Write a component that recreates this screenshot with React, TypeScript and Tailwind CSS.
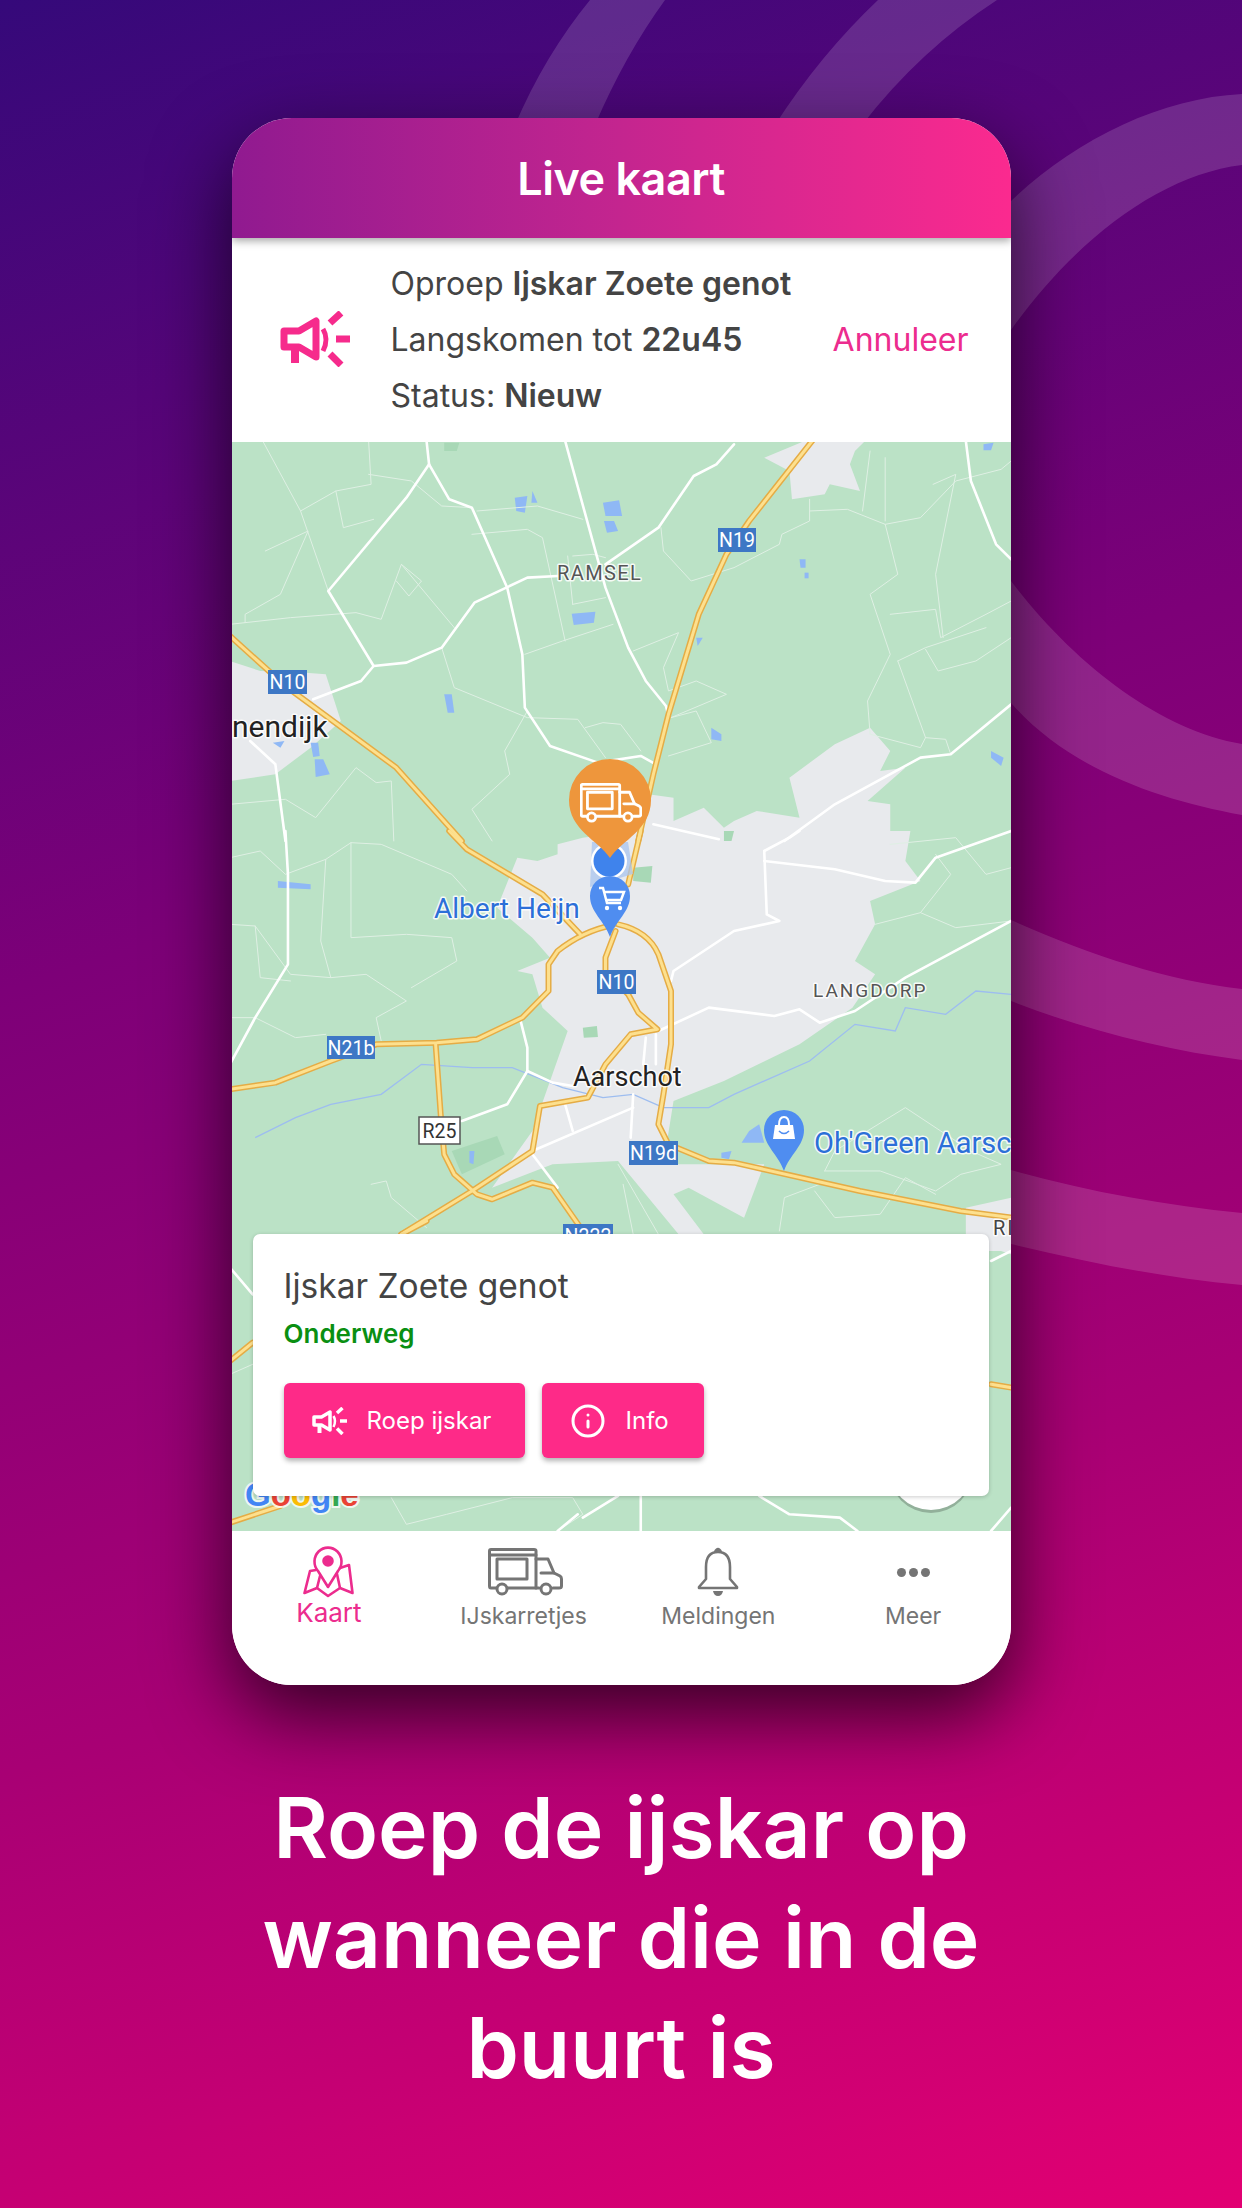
import { Info } from 'lucide-react';

const FONT = "font-['Inter','Noto_Sans',sans-serif]";

// map traced in three strips, each with its own scale
const Z2 = 'translate(-2 -1) scale(0.504 0.3333)';
const Z3 = 'translate(-2 389) scale(0.504 0.3333)';
const Z4 = 'translate(-2 779) scale(0.504 0.3333)';

const urban = [
    [Z2, 'M1060 50 L1140 0 L1260 0 L1240 30 L1230 70 L1250 150 L1190 130 L1180 160 L1115 175 L1110 90 Z'],
    [Z2, 'M0 660 L60 690 L150 695 L190 700 L220 840 L160 920 L90 1000 L0 1020 Z'],
    [Z2, 'M830 1060 L880 1070 L880 1140 L940 1100 L980 1160 L1000 1140 L1045 1110 L1130 1130 L1110 1010 L1200 910 L1270 860 L1310 930 L1290 990 L1340 980 L1265 1080 L1310 1090 L1310 1200 L800 1200 Z'],
    [Z3, 'M650 40 L700 20 L800 0 L1350 0 L1340 90 L1370 150 L1270 210 L1280 280 L1240 390 L1280 430 L1235 530 L1130 640 L980 750 L880 810 L860 1000 L1060 1000 L1020 1160 L910 1070 L880 1090 L940 1210 L890 1210 L770 990 L640 1000 L520 1070 L600 900 L670 600 L620 530 L600 430 L570 420 L635 380 L600 320 L530 230 L570 80 L610 90 L650 70 Z'],
    [Z3, 'M1460 1130 L1550 1100 L1550 1260 L1460 1260 Z'],
    [Z4, 'M1460 0 L1550 0 L1550 100 L1510 80 Z'],
];

const parks = [
    [Z3, 'M700 590 L728 585 L730 618 L702 620 Z'],
    [Z3, 'M440 960 L530 915 L545 970 L460 1030 Z'],
    [Z3, 'M800 110 L838 105 L835 155 L800 150 Z'],
    [Z3, 'M980 0 L1000 0 L995 30 L980 30 Z'],
    [Z2, 'M425 5 L455 5 L450 30 L425 30 Z'],
];

const water = [
    [Z2, 'M565 170 L590 165 L585 215 L568 210 Z'],
    [Z2, 'M600 150 L610 185 L598 185 Z'],
    [Z2, 'M740 185 L772 178 L778 225 L745 225 Z'],
    [Z2, 'M742 240 L762 240 L770 270 L748 275 Z'],
    [Z2, 'M678 518 L725 512 L722 545 L682 552 Z'],
    [Z2, 'M160 905 L175 905 L178 945 L165 948 Z'],
    [Z2, 'M168 955 L185 955 L198 1000 L170 1008 Z'],
    [Z2, 'M85 905 L108 900 L100 920 Z'],
    [Z2, 'M1130 355 L1142 355 L1142 380 L1132 380 Z'],
    [Z2, 'M1140 395 L1148 395 L1148 412 L1140 412 Z'],
    [Z2, 'M425 760 L440 760 L445 815 L432 815 Z'],
    [Z2, 'M955 860 L975 880 L975 900 L955 895 Z'],
    [Z2, 'M1495 10 L1515 5 L1510 28 L1495 28 Z'],
    [Z2, 'M1510 930 L1535 950 L1530 975 L1510 950 Z'],
    [Z2, 'M925 590 L938 590 L928 615 Z'],
    [Z3, 'M1030 900 L1050 880 L1060 935 L1015 935 Z'],
    [Z3, 'M975 965 L995 960 L990 985 L975 980 Z'],
    [Z3, 'M95 150 L160 160 L160 175 L95 170 Z'],
    [Z3, 'M475 960 L485 960 L483 1000 L475 995 Z'],
];

const thinRoads = [
    [Z2, 'M65 0 L140 210 L195 450'],
    [Z2, 'M140 210 L210 150 L225 260 L285 235'],
    [Z2, 'M210 150 L280 130 L275 0'],
    [Z2, 'M275 100 L360 120 L420 195 L480 200'],
    [Z2, 'M70 330 L155 270 L100 460 L30 520 L30 545'],
    [Z2, 'M0 550 L120 530 L250 515 L300 535 L340 370 L445 560'],
    [Z2, 'M340 370 L380 420 L355 465 L330 420'],
    [Z2, 'M490 210 L610 195 L700 235'],
    [Z2, 'M480 280 L590 265 L620 290 L665 600'],
    [Z2, 'M585 640 L660 600 L760 550'],
    [Z2, 'M420 620 L445 740 L590 830 L690 835 L745 950'],
    [Z2, 'M590 810 L545 930 L555 1000 L480 1105 L520 1200'],
    [Z2, 'M705 860 L740 845 L775 850 L815 930'],
    [Z2, 'M800 630 L890 575 L860 680 L870 750 L925 720 L985 760 L875 830 L925 810 L955 905 L870 945'],
    [Z2, 'M680 345 L720 340 L745 350 M680 490 L745 470 M670 345 L680 490'],
    [Z2, 'M855 260 L860 330 L915 420 L1000 380 L1090 310 L1095 280 L1150 240 L1150 210 L1225 205 L1300 250 L1325 400 L1270 460 L1310 640 L1265 780 L1270 880 L1370 920 L1380 890 L1420 895 L1430 940'],
    [Z2, 'M1150 210 L1150 175 M1300 50 L1300 240 M1270 30 L1255 210'],
    [Z2, 'M1300 250 L1370 230 L1440 120 L1530 85 L1550 60'],
    [Z2, 'M1310 520 L1400 505 L1410 590 L1500 520 L1550 480'],
    [Z2, 'M1325 660 L1380 620 L1500 560 M1380 625 L1405 690 L1480 660 L1550 590'],
    [Z2, 'M1325 660 L1380 890'],
    [Z2, 'M1395 130 L1440 100 L1400 400 L1415 590'],
    [Z2, 'M0 1090 L110 1075 L170 1130 L250 980 L290 1025 L320 1020 L325 1200'],
    [Z3, 'M0 80 L60 60 L110 130 L190 85 L240 35 L300 40 L440 130 L470 180'],
    [Z3, 'M190 85 L180 330 L200 440 L270 430 L350 510 L290 560 L300 630'],
    [Z3, 'M240 35 L240 320 L350 310 L440 320 L450 390 L360 470'],
    [Z3, 'M0 280 L50 285 L120 430 L200 440'],
    [Z3, 'M50 285 L60 440 L120 450'],
    [Z3, 'M0 560 L50 560 L130 620 L190 610'],
    [Z3, 'M1310 40 L1440 20 L1500 130 L1550 110'],
    [Z3, 'M1280 280 L1370 245 L1440 290 L1550 270'],
    [Z3, 'M1370 245 L1430 130 L1400 70'],
    [Z3, 'M1180 1020 L1290 1020 L1400 1080 L1450 1030 L1530 1000 L1470 960 L1340 830 L1200 960 L1180 1020'],
    [Z3, 'M1160 1080 L1200 1160 L1290 1150 L1340 1040 L1400 1090'],
    [Z3, 'M280 1060 L310 1050 L320 1100 L390 1190'],
    [Z3, 'M770 1000 L850 1210 M780 1060 L800 1210'],
    [Z3, 'M1090 1200 L1100 1100 L1170 1060'],
    [Z4, 'M320 830 L350 910 L430 880 L560 830 L680 830 L700 880 L650 930'],
    [Z4, 'M0 460 L45 430 M0 460 L0 400'],
];

const mainRoads = [
    [Z2, 'M390 0 L395 70 L435 175 L480 200 L550 440 L580 640 L585 800 L635 915 L730 965 L815 945 L845 970'],
    [Z2, 'M395 70 L350 170 L195 450 L285 675 L260 720 L165 775'],
    [Z2, 'M285 675 L350 665 L420 620 L485 485 L590 410 L650 405'],
    [Z2, 'M665 0 L745 440 L790 620 L825 720 L865 795 L870 825'],
    [Z2, 'M745 370 L850 260 L920 105 L965 70 L1000 10'],
    [Z2, 'M1460 0 L1470 120 L1520 310 L1550 355'],
    [Z2, 'M1550 790 L1430 940 L1370 950 L1200 1090 L1100 1200'],
    [Z2, 'M840 1150 L970 1195'],
    [Z2, 'M40 900 L90 970 L110 1200'],
    [Z3, 'M110 0 L115 130 L115 400 L50 560 L0 700'],
    [Z3, 'M1060 60 L1065 250 L1090 270 L1000 300 L880 420 L875 450'],
    [Z3, 'M1060 60 L1110 20 L1130 0'],
    [Z3, 'M1060 90 L1200 115 L1300 150 L1360 155 L1400 80 L1550 0'],
    [Z3, 'M850 600 L950 530 L1080 555 L1130 535 L1170 575 L1240 540 L1340 440 L1550 270'],
    [Z3, 'M575 560 L590 650 L590 720 L550 820 L460 870'],
    [Z3, 'M590 720 L640 755 L680 765'],
    [Z3, 'M600 960 L800 830'],
    [Z3, 'M665 820 L680 900'],
    [Z3, 'M825 620 L820 700 M845 610 L845 700 M800 790 L795 920'],
    [Z3, 'M600 970 L650 1070'],
    [Z4, 'M0 140 L45 220'],
    [Z4, 'M815 825 L815 930 M690 880 L650 930 M770 825 L700 890'],
    [Z4, 'M1050 825 L1110 880 L1210 890 L1245 930 M1510 930 L1550 860 M1510 120 L1550 90'],
];

const highways = [
    [Z2, 'M1155 0 L1030 240 L985 340 L930 520 L870 820 L840 1000 L810 1200'],
    [Z3, 'M815 0 L790 160'],
    [Z2, 'M0 585 L110 735 L330 980 L460 1200'],
    [Z3, 'M435 0 L470 55 L620 190 L695 310'],
    [Z3, 'M760 282 Q700 300 650 360 L632 400 L632 480 L580 560 L490 625 L410 635 L290 640 L200 690 L90 755 L0 775'],
    [Z3, 'M765 300 L745 380 L745 420 L790 490 L810 545 L848 595 L795 610 L745 700 L710 800 L615 825 L600 960 L480 1080 L340 1210'],
    [Z3, 'M770 280 Q830 300 850 370 L875 480 L875 640 L860 790 L850 880 L870 940 L950 990 L1000 995 L1250 1080 L1450 1140 L1550 1160'],
    [Z3, 'M408 640 L418 850 L425 970 L445 1030 L490 1090 L520 1105 L600 1055 L640 1070 L700 1200'],
    [Z4, 'M0 420 L45 365 M1510 490 L1550 500 M0 905 L100 855 M340 40 L390 0'],
];

function Lines({ items, color, width }: { items: string[][]; color: string; width: number }) {
    return (
        <>
            {items.map(([t, d], i) => (
                <path key={i} transform={t} d={d} fill="none" stroke={color} strokeWidth={width} strokeLinejoin="round" strokeLinecap="round" vectorEffect="non-scaling-stroke" />
            ))}
        </>
    );
}

function Areas({ items, color }: { items: string[][]; color: string }) {
    return (
        <>
            {items.map(([t, d], i) => (
                <path key={i} transform={t} d={d} fill={color} />
            ))}
        </>
    );
}

function Shield({ x, y, w, h, label, plain }: { x: number; y: number; w: number; h: number; label: string; plain?: boolean }) {
    return (
        <g>
            <rect x={x} y={y} width={w} height={h} fill={plain ? '#ffffff' : '#3d77c5'} stroke={plain ? '#555555' : 'none'} strokeWidth={plain ? 1.5 : 0} />
            <text x={x + w / 2} y={y + h / 2 + 7} textAnchor="middle" fontSize={19.5} fontFamily="Roboto, sans-serif" fill={plain ? '#333333' : '#ffffff'}>{label}</text>
        </g>
    );
}

function Label({ x, y, size, color, children, spacing }: { x: number; y: number; size: number; color: string; children: string; spacing?: number }) {
    return (
        <text x={x} y={y} fontSize={size} fontFamily="Roboto, sans-serif" fill={color} letterSpacing={spacing} stroke="#ffffff" strokeWidth={3} strokeOpacity={0.85} paintOrder="stroke" strokeLinejoin="round">
            {children}
        </text>
    );
}

function TruckIcon({ color, x, y, width, height, sw = 3 }: { color: string; x?: number; y?: number; width: number; height: number; sw?: number }) {
    return (
        <svg x={x} y={y} width={width} height={height} viewBox="0 0 75 48" fill="none" stroke={color} strokeWidth={sw} strokeLinejoin="round" strokeLinecap="round">
            <path d="M8 40 H3 Q1.5 40 1.5 38 V3 Q1.5 1.5 3 1.5 H46 Q48 1.5 48 3 V40 H20" />
            <path d="M1.5 7 H48" />
            <rect x="9" y="11" width="30" height="20" />
            <path d="M48 11 H60 L66 25 L72 28 Q73.5 29 73.5 31 V38 Q73.5 40 71 40 H65 M51 40 H48" />
            <path d="M53 25 H66" />
            <circle cx="14" cy="41" r="5" />
            <circle cx="58" cy="41" r="5" />
        </svg>
    );
}

function MegaphoneIcon({ className, color }: { className: string; color: string }) {
    return (
        <svg className={className} viewBox="0 0 70 56" fill="none" stroke={color} strokeWidth={7}>
            <path d="M4 20 H19 L36 10 V46 L19 36 H4 Z" strokeLinejoin="round" />
            <path d="M15 37 V52" strokeWidth={8} />
            <path d="M43 18 Q49 28 43 40" strokeWidth={5} />
            <path d="M50 12 L61 2 M56 28 H70 M50 43 L61 54" />
        </svg>
    );
}

function MapPinIcon() {
    return (
        <svg className="w-[51px] h-[52px]" viewBox="0 0 51 52" fill="none" stroke="#ec2c8e" strokeWidth={2.6} strokeLinejoin="round" strokeLinecap="round">
            <path d="M25 41 L15 25 A13.5 14 0 1 1 35 25 Z" />
            <circle cx="25" cy="15" r="4.5" fill="#ec2c8e" />
            <path d="M13 24 L7 25 L1.5 47 L14 42 L25 50 L37 42 L49.5 47 L46 19 L37 22" />
            <path d="M14 42 L17 30 M37 42 L34 28" />
        </svg>
    );
}

function BellIcon() {
    return (
        <svg className="w-[42px] h-[50px]" viewBox="0 0 42 50" fill="none" stroke="#757575" strokeWidth={2.6} strokeLinejoin="round">
            <path d="M21 5 C12 5 9 12 9 20 V32 L2 40 V41 H40 V40 L33 32 V20 C33 12 30 5 21 5 Z" />
            <path d="M18 5 Q21 -1 24 5" fill="#757575" />
            <path d="M16 44 H26 Q25 49 21 49 Q17 49 16 44 Z" fill="#757575" stroke="none" />
        </svg>
    );
}

function MapCanvas() {
    return (
        <svg className="absolute inset-0 w-[779px] h-[1089px]" viewBox="0 0 779 1089">
            <rect width="779" height="1089" fill="#bbe2c6" />
            <Areas items={urban} color="#e8eaed" />
            <Areas items={parks} color="#a8d8b6" />
            <Areas items={water} color="#8fb8f5" />
            <path transform={Z3} d="M1550 490 L1480 480 L1420 550 L1340 530 L1320 600 L1240 580 L1150 690 L1000 790 L950 830 L860 830 L800 790 L740 800 L660 770 L560 710 L480 710 L380 700 L300 790 L200 820 L130 860 L50 920" fill="none" stroke="#9dbdf0" strokeWidth={1.3} vectorEffect="non-scaling-stroke" />
            <Lines items={thinRoads} color="#dff0e4" width={1} />
            <Lines items={mainRoads} color="#ffffff" width={2.6} />
            <Lines items={highways} color="#e5ac45" width={6} />
            <Lines items={highways} color="#fde08e" width={3} />

            <Shield x={486} y={86} w={38} h={24} label="N19" />
            <Shield x={36} y={228} w={39} h={24} label="N10" />
            <Shield x={365} y={528} w={39} h={24} label="N10" />
            <Shield x={95} y={594} w={48} h={23} label="N21b" />
            <Shield x={187} y={675} w={41} h={27} label="R25" plain />
            <Shield x={397} y={699} w={49} h={24} label="N19d" />
            <Shield x={331} y={782} w={50} h={24} label="N222" />

            <Label x={325} y={138} size={20} color="#555555" spacing={1.4}>RAMSEL</Label>
            <Label x={581} y={555} size={19} color="#555555" spacing={2}>LANGDORP</Label>
            <Label x={0} y={295} size={30} color="#222222">nendijk</Label>
            <Label x={341} y={644} size={27} color="#222222">Aarschot</Label>
            <Label x={202} y={476} size={28} color="#2c6fd8">Albert Heijn</Label>
            <Label x={582} y={711} size={29} color="#2c6fd8">Oh'Green Aarsc</Label>
            <Label x={761} y={793} size={20} color="#444444" spacing={2}>RI</Label>

            <g>
                <path d="M360 400 L396 400 L401 432 L358 445 Z" fill="#a9c4ee" opacity={0.75} />
                <circle cx="377" cy="419" r="18" fill="#ffffff" />
                <circle cx="377" cy="419" r="15.5" fill="#3f83ec" />
            </g>
            <path d="M378 416 C366 398 337 388 337 358 A41 41 0 1 1 419 358 C419 388 390 398 378 416 Z" fill="#ee963c" />
            <TruckIcon color="#ffffff" x={348} y={341} width={62} height={40} sw={3.4} />

            <path d="M378 495 C372 478 358 470 358 454 A20 20 0 1 1 398 454 C398 470 384 478 378 495 Z" fill="#4f8df0" />
            <path d="M367 446 H371 L375 461 H389 M373 450 H392 L389 458 H375" fill="none" stroke="#ffffff" strokeWidth={2.5} />
            <circle cx="375" cy="466" r="2.2" fill="#ffffff" />
            <circle cx="388" cy="466" r="2.2" fill="#ffffff" />

            <path d="M552 729 C546 712 532 704 532 688 A20 20 0 1 1 572 688 C572 704 558 712 552 729 Z" fill="#4f8df0" />
            <path d="M543 683 H561 L563 697 H541 Z" fill="#ffffff" />
            <path d="M547 683 Q547 675 552 675 Q557 675 557 683" fill="none" stroke="#ffffff" strokeWidth={2} />
            <path d="M547 689 Q552 694 557 689" fill="none" stroke="#4f8df0" strokeWidth={1.6} />

            <text x={13} y={1064} fontSize={33} fontWeight={700} fontFamily="Liberation Sans, sans-serif" stroke="#ffffff" strokeWidth={4} paintOrder="stroke" strokeOpacity={0.75}>
                <tspan fill="#4285f4">G</tspan>
                <tspan fill="#ea4335">o</tspan>
                <tspan fill="#fbbc05">o</tspan>
                <tspan fill="#4285f4">g</tspan>
                <tspan fill="#34a853">l</tspan>
                <tspan fill="#ea4335">e</tspan>
            </text>

            <circle cx="699" cy="1029" r="42" fill="#000000" opacity={0.22} />
            <circle cx="699" cy="1026" r="42" fill="#ffffff" />
        </svg>
    );
}

function NavItem({ label, active, children }: { label: string; active?: boolean; children: React.ReactNode }) {
    return (
        <div className="flex-1 flex flex-col items-center">
            <div className="h-[52px] flex items-center justify-center">{children}</div>
            <span className={active ? 'text-[26px] leading-[32px] mt-[-1px] text-[#ec2c8e]' : 'text-[23px] leading-[32px] mt-[2px] text-[#757575]'}>{label}</span>
        </div>
    );
}

export default function App() {
    return (
        <div className={`relative w-[1242px] h-[2208px] overflow-hidden flex flex-col items-center pt-[118px] bg-[linear-gradient(162deg,#35097a_0%,#7d0078_38%,#a80074_68%,#e20072_100%)] ${FONT}`}>
            <svg className="absolute inset-0 w-[1242px] h-[2208px]" viewBox="0 0 1242 2208" fill="#ffffff" opacity={0.14}>
                <path d="M590 0 H665 Q625 55 595 125 L515 125 Q545 55 590 0 Z" />
                <path d="M878 0 H997 Q920 50 862 125 L775 125 Q820 55 878 0 Z" />
                <path d="M1242 94 C1160 98 1075 140 1011 201 L950 450 L1011 581 C1075 665 1160 730 1242 744 V815 C1160 800 1070 770 1011 703 L900 450 L1011 330 C1075 240 1160 175 1242 165 Z" />
                <path d="M1011 920 C1090 955 1165 980 1242 989 V1060 C1165 1050 1085 1030 1011 1001 Z" />
                <path d="M1011 1170 C1090 1192 1165 1205 1242 1213 V1285 C1165 1278 1085 1262 1011 1244 Z" />
            </svg>

            <div className="relative w-[779px] h-[1567px] rounded-[60px] overflow-hidden bg-white flex flex-col shrink-0 shadow-[0_30px_80px_rgba(0,0,0,0.7)]">
                <div className="relative z-10 h-[120px] shrink-0 flex items-center justify-center bg-[linear-gradient(90deg,#901a90_0%,#c4258f_50%,#fb2a8f_100%)] shadow-[0_3px_8px_rgba(0,0,0,0.35)]">
                    <span className="text-[45px] mt-[2px] font-semibold text-white tracking-[-0.5px]">Live kaart</span>
                </div>

                <div className="h-[204px] shrink-0 flex items-center pl-[48px] pr-[42px] bg-white">
                    <MegaphoneIcon className="w-[70px] h-[56px] mt-[-2px] shrink-0" color="#f62b8c" />
                    <div className="ml-[41px] flex-1 flex flex-col text-[32px] leading-[56px] text-[#444444] mt-[-1px]">
                        <span>Oproep <b className="font-semibold">Ijskar Zoete genot</b></span>
                        <span>Langskomen tot <b className="font-semibold">22u45</b></span>
                        <span>Status: <b className="font-semibold">Nieuw</b></span>
                    </div>
                    <span className="text-[32px] text-[#ec2c8e]">Annuleer</span>
                </div>

                <div className="relative h-[1089px] shrink-0 bg-[#bbe2c6] overflow-hidden">
                    <MapCanvas />
                    <div className="absolute left-[21px] top-[792px] w-[736px] h-[262px] rounded-[7px] bg-white shadow-[0_1px_4px_rgba(0,0,0,0.2)] pl-[31px] pt-[32px] flex flex-col">
                        <span className="text-[33.5px] leading-[40px] text-[#444444]">Ijskar Zoete genot</span>
                        <span className="text-[26px] leading-[34px] mt-[11px] font-semibold text-[#0a8f12]">Onderweg</span>
                        <div className="flex gap-[17px] mt-[32px]">
                            <div className="w-[241px] h-[75px] rounded-[6px] bg-[#fe2a88] shadow-[0_3px_5px_rgba(0,0,0,0.3)] flex items-center pl-[28px] gap-[20px] text-white text-[24px]">
                                <MegaphoneIcon className="w-[35px] h-[28px]" color="#ffffff" />
                                <span>Roep ijskar</span>
                            </div>
                            <div className="w-[162px] h-[75px] rounded-[6px] bg-[#fe2a88] shadow-[0_3px_5px_rgba(0,0,0,0.3)] flex items-center pl-[28px] gap-[20px] text-white text-[24px]">
                                <Info className="w-[36px] h-[36px]" strokeWidth={2} />
                                <span>Info</span>
                            </div>
                        </div>
                    </div>
                </div>

                <div className="flex-1 flex items-start pt-[15px] bg-white">
                    <NavItem label="Kaart" active><MapPinIcon /></NavItem>
                    <NavItem label="IJskarretjes"><div className="ml-[3px] flex"><TruckIcon color="#757575" width={75} height={48} /></div></NavItem>
                    <NavItem label="Meldingen"><BellIcon /></NavItem>
                    <NavItem label="Meer">
                        <div className="flex gap-[3px]">
                            <span className="w-[9px] h-[9px] rounded-full bg-[#757575]" />
                            <span className="w-[9px] h-[9px] rounded-full bg-[#757575]" />
                            <span className="w-[9px] h-[9px] rounded-full bg-[#757575]" />
                        </div>
                    </NavItem>
                </div>
            </div>

            <div className="relative mt-[88px] w-[800px] text-center text-white text-[84px] leading-[110px] font-semibold">
                Roep de ijskar op wanneer die in de buurt is
            </div>
        </div>
    );
}
